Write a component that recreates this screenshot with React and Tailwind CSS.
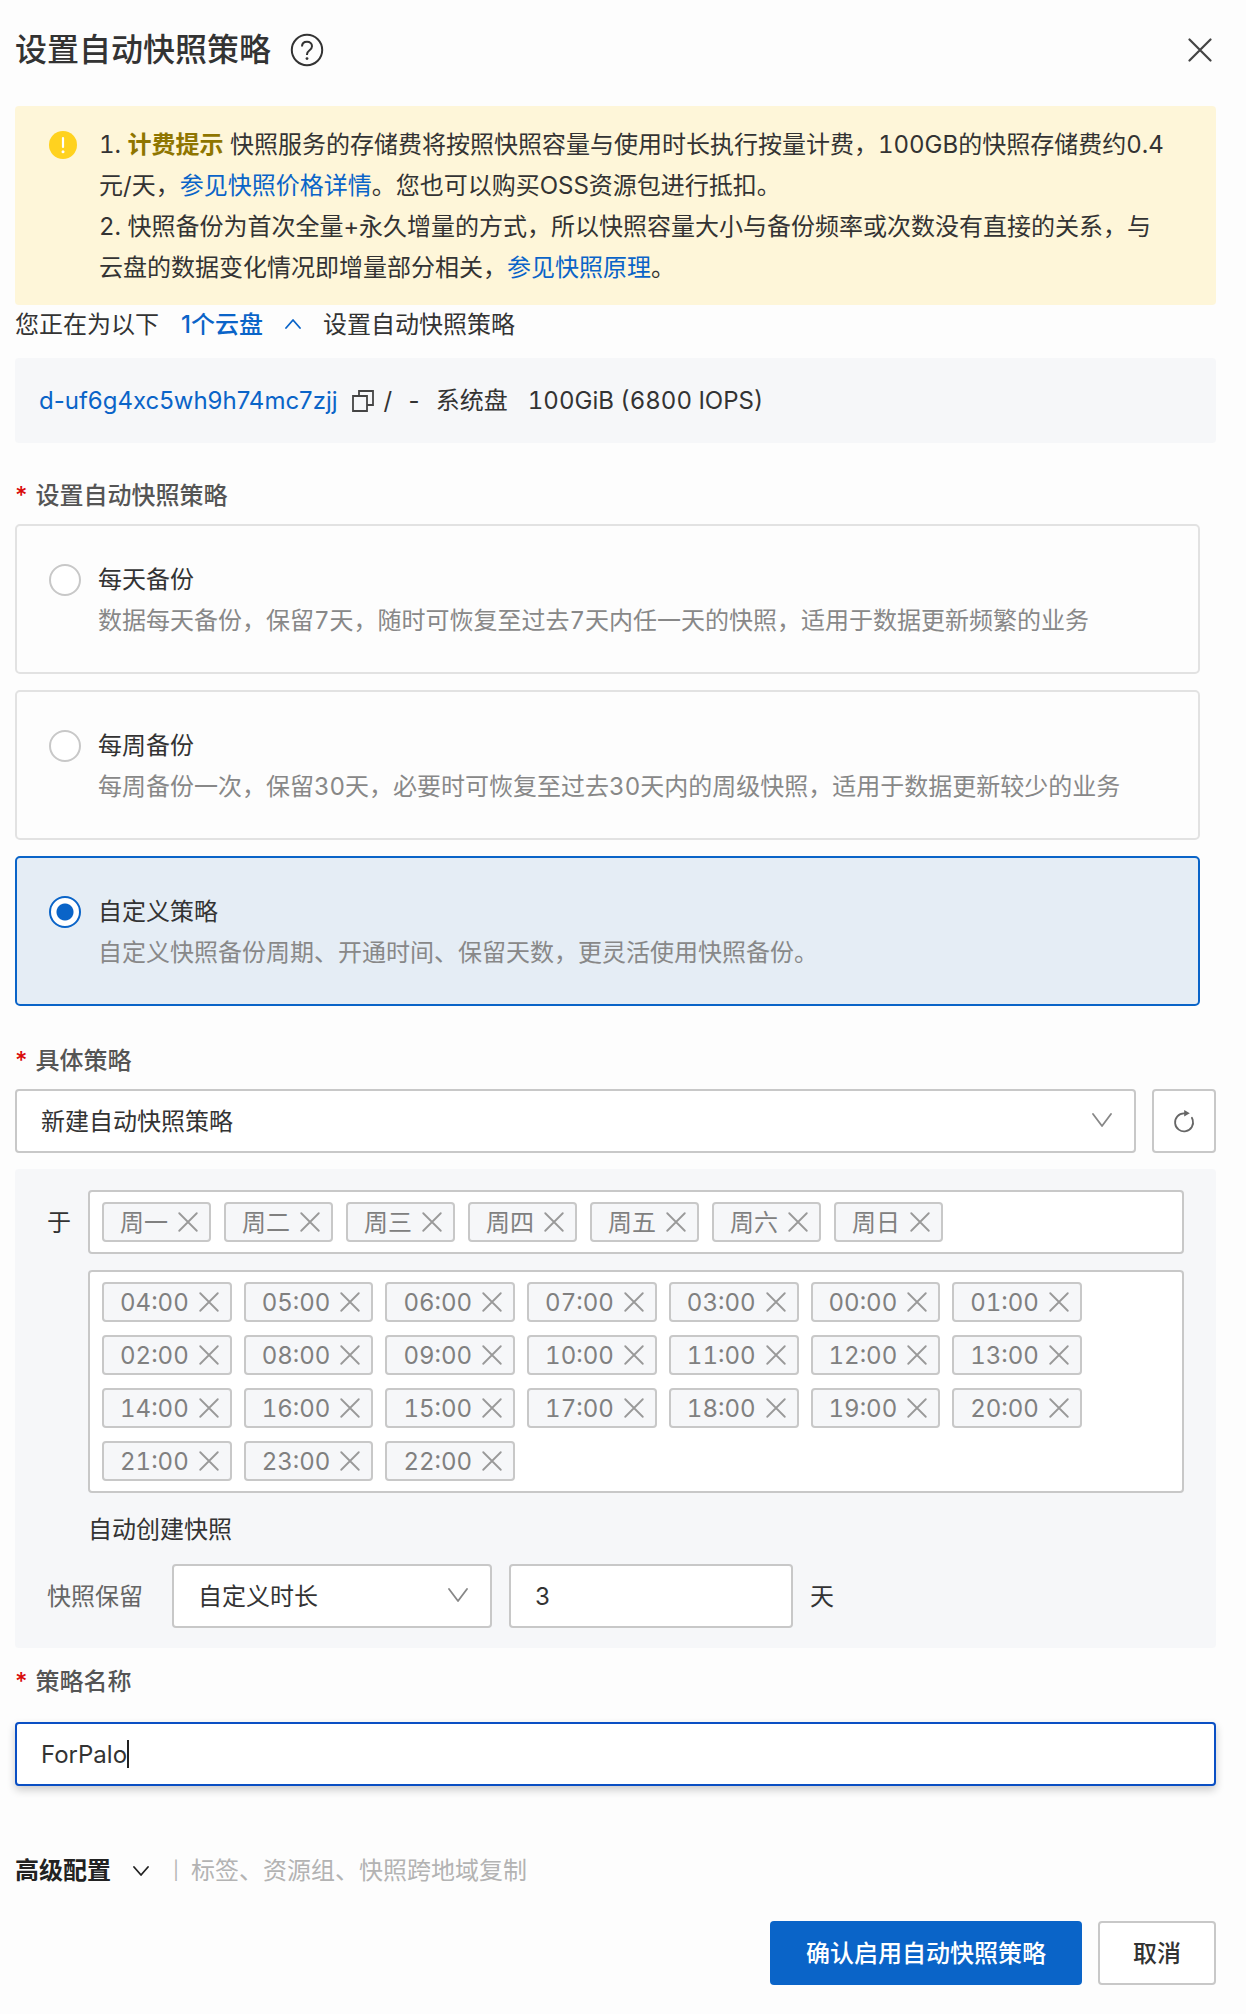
import { useState } from 'react'

const DAYS = ['周一', '周二', '周三', '周四', '周五', '周六', '周日']

const HOURS = [
  '04:00', '05:00', '06:00', '07:00', '03:00', '00:00', '01:00',
  '02:00', '08:00', '09:00', '10:00', '11:00', '12:00', '13:00',
  '14:00', '16:00', '15:00', '17:00', '18:00', '19:00', '20:00',
  '21:00', '23:00', '22:00',
]

const PLANS = [
  {
    id: 'daily',
    title: '每天备份',
    desc: '数据每天备份，保留7天，随时可恢复至过去7天内任一天的快照，适用于数据更新频繁的业务',
  },
  {
    id: 'weekly',
    title: '每周备份',
    desc: '每周备份一次，保留30天，必要时可恢复至过去30天内的周级快照，适用于数据更新较少的业务',
  },
  {
    id: 'custom',
    title: '自定义策略',
    desc: '自定义快照备份周期、开通时间、保留天数，更灵活使用快照备份。',
  },
]

function CrossIcon({ className }) {
  return (
    <svg viewBox="0 0 24 24" className={className} fill="none" stroke="currentColor" strokeWidth="2.2" strokeLinecap="round" aria-hidden="true">
      <path d="M1.5 1.5l21 21M22.5 1.5l-21 21" />
    </svg>
  )
}

function HelpIcon() {
  return (
    <svg viewBox="0 0 34 34" className="size-[34px]" fill="none" stroke="currentColor" strokeWidth="2" aria-hidden="true">
      <circle cx="17" cy="17" r="15.2" />
      <path d="M12 13.6c0-3 2.1-4.8 5-4.8s5 1.8 5 4.5c0 2.2-1.3 3.2-2.7 4.2-1.5 1.1-2.3 1.9-2.3 3.9v.6" />
      <circle cx="17" cy="25.6" r="1.4" fill="currentColor" stroke="none" />
    </svg>
  )
}

function NoticeIcon() {
  return (
    <svg viewBox="0 0 28 28" className="size-7 shrink-0" aria-hidden="true">
      <circle cx="14" cy="14" r="14" fill="#ffd21f" />
      <path d="M14 7v9" stroke="#fff" strokeWidth="2.2" strokeLinecap="round" />
      <circle cx="14" cy="20.8" r="1.5" fill="#fff" />
    </svg>
  )
}

function CopyIcon() {
  return (
    <svg viewBox="0 0 22 22" className="size-[22px]" fill="none" stroke="currentColor" strokeWidth="1.8" aria-hidden="true">
      <path d="M1 6h14v15H1z" />
      <path d="M7 6V1h14v14h-6" />
    </svg>
  )
}

function RefreshIcon() {
  return (
    <svg viewBox="0 0 22 24" className="h-6 w-[22px]" fill="none" stroke="currentColor" strokeWidth="1.8" aria-hidden="true">
      <path d="M12 4.4H11a9 9 0 1 0 8.7 6.4l-.8-2" strokeLinecap="round" />
      <path d="M11.2 1l5.6 3.2-5.6 3.2z" fill="currentColor" stroke="none" />
    </svg>
  )
}

function ChevronIcon({ className, points = '1,1 10,13 19,1', box = '0 0 20 14' }) {
  return (
    <svg viewBox={box} className={className} fill="none" stroke="currentColor" strokeWidth="1.8" strokeLinecap="round" strokeLinejoin="round" aria-hidden="true">
      <polyline points={points} />
    </svg>
  )
}

function FieldLabel({ as: Tag = 'label', children, ...rest }) {
  return (
    <Tag className="flex items-center gap-2 font-medium text-[#555] proportional-nums" {...rest}>
      <span className="text-[#d90b0b]">*</span>
      <span>{children}</span>
    </Tag>
  )
}

function SelectBox({ id, options, className }) {
  return (
    <div className={`relative ${className}`}>
      <select
        id={id}
        className="h-16 w-full appearance-none rounded-[4px] border-2 border-[#c8c8c8] bg-white pr-14 pl-6 text-[#333] outline-none"
      >
        {options.map(item => (
          <option key={item}>{item}</option>
        ))}
      </select>
      <ChevronIcon className="pointer-events-none absolute top-6 right-6 h-[14px] w-5 text-[#888]" />
    </div>
  )
}

function TagBox({ items, onRemove, label, gap }) {
  return (
    <ul aria-label={label} className={`flex min-h-16 flex-wrap gap-y-[13px] rounded-[4px] border-2 border-[#c8c8c8] bg-white px-3 py-[10px] ${gap}`}>
      {items.map(item => (
        <li key={item} className="flex h-10 items-center gap-[10px] rounded-[4px] border-2 border-[#c8c8c8] bg-[#f6f7f9] pr-[11px] pl-4 text-[#808080]">
          {item}
          <button type="button" aria-label={`移除 ${item}`} onClick={() => onRemove(item)} className="text-[#999]">
            <CrossIcon className="size-5" />
          </button>
        </li>
      ))}
    </ul>
  )
}

function App() {
  const [plan, setPlan] = useState('custom')
  const [days, setDays] = useState(DAYS)
  const [hours, setHours] = useState(HOURS)
  const [keepDays, setKeepDays] = useState('3')
  const [name, setName] = useState('ForPalo')

  return (
    <div className="min-h-screen bg-[#fdfdfd] font-['Inter','Noto_Sans_CJK_SC',sans-serif] text-2xl leading-[41px] text-[#333] tabular-nums">
      <div className="pt-[29px] pr-[30px] pb-7 pl-[15px]">
        <header className="flex items-center justify-between">
          <h1 className="flex items-center gap-[19px] text-[32px] font-medium text-[#333]">
            设置自动快照策略
            <button type="button" aria-label="帮助"><HelpIcon /></button>
          </h1>
          <button type="button" aria-label="关闭" className="mr-1 text-[#444]">
            <CrossIcon className="size-6" />
          </button>
        </header>

        <section className="mt-9 flex gap-[22px] rounded-[4px] bg-[#fef6d9] pt-[18px] pr-9 pb-[17px] pl-[34px]">
          <div className="flex h-[41px] items-center"><NoticeIcon /></div>
          <div className="pr-2">
            <p>
              1. <strong className="font-bold text-[#8f7500]">计费提示</strong> 快照服务的存储费将按照快照容量与使用时长执行按量计费，100GB的快照存储费约0.4元/天，
              <a href="#price" className="text-[#0a64c8]">参见快照价格详情</a>。您也可以购买OSS资源包进行抵扣。
            </p>
            <p>
              2. 快照备份为首次全量+永久增量的方式，所以快照容量大小与备份频率或次数没有直接的关系，与云盘的数据变化情况即增量部分相关，
              <a href="#principle" className="text-[#0a64c8]">参见快照原理</a>。
            </p>
          </div>
        </section>

        <div className="flex h-[38px] items-center">
          <span>您正在为以下</span>
          <button type="button" className="mx-[22px] flex items-center gap-[22px] font-medium text-[#0a64c8] proportional-nums">
            1个云盘
            <ChevronIcon className="h-[10px] w-4" box="0 0 16 10" points="1,9 8,1 15,9" />
          </button>
          <span>设置自动快照策略</span>
        </div>

        <div className="mt-[15px] flex items-center rounded-[4px] bg-[#f6f7f9] px-6 py-[22px]">
          <a href="#disk" className="text-[#0a64c8] proportional-nums">d-uf6g4xc5wh9h74mc7zjj</a>
          <button type="button" aria-label="复制" className="mr-[10px] ml-[14px] text-[#444]"><CopyIcon /></button>
          <span>/</span>
          <span className="mx-[14px]">-</span>
          <span>系统盘</span>
          <span className="ml-5">100GiB (6800 IOPS)</span>
        </div>

        <div className="mt-8">
          <FieldLabel as="div" id="plan-label">设置自动快照策略</FieldLabel>
          <div role="radiogroup" aria-labelledby="plan-label" className="mt-2 mr-4 flex flex-col gap-4">
            {PLANS.map(item => (
              <label
                key={item.id}
                className={
                  plan === item.id
                    ? 'flex gap-[17px] rounded-[5px] border-2 border-[#0a64c8] bg-[#e5edf5] px-8 pt-[33px] pb-[31px]'
                    : 'flex gap-[17px] rounded-[5px] border-2 border-[#e2e2e2] px-8 pt-[33px] pb-[31px]'
                }
              >
                <span className="flex h-[41px] items-center">
                  <input
                    type="radio"
                    name="plan"
                    value={item.id}
                    checked={plan === item.id}
                    onChange={() => setPlan(item.id)}
                    className="size-8 appearance-none rounded-full border-2 border-[#c8c8c8] bg-white checked:border-[#0a64c8] checked:bg-[radial-gradient(circle,#0a64c8_8px,#fff_9px)]"
                  />
                </span>
                <span>
                  <span className="block">{item.title}</span>
                  <span className="block text-[#888]">{item.desc}</span>
                </span>
              </label>
            ))}
          </div>
        </div>

        <div className="mt-[34px]">
          <FieldLabel htmlFor="policy">具体策略</FieldLabel>
          <div className="mt-2 flex gap-4">
            <SelectBox id="policy" options={['新建自动快照策略']} className="flex-1" />
            <button type="button" aria-label="刷新" className="flex size-16 items-center justify-center rounded-[4px] border-2 border-[#c8c8c8] bg-white text-[#666]">
              <RefreshIcon />
            </button>
          </div>
        </div>

        <section className="mt-4 rounded-[4px] bg-[#f6f7f9] px-8 pt-[21px] pb-5">
          <div className="flex gap-[17px]">
            <span className="flex h-16 items-center">于</span>
            <div className="flex flex-1 flex-col gap-4">
              <TagBox label="重复日期" gap="gap-x-[13px]" items={days} onRemove={item => setDays(days.filter(day => day !== item))} />
              <TagBox label="创建时间" gap="gap-x-3" items={hours} onRemove={item => setHours(hours.filter(hour => hour !== item))} />
              <span>自动创建快照</span>
            </div>
          </div>
          <div className="mt-[14px] flex items-center">
            <label htmlFor="keep-type" className="text-[#666]">快照保留</label>
            <SelectBox id="keep-type" options={['自定义时长']} className="ml-[29px] w-80" />
            <input
              type="text"
              aria-label="保留天数"
              value={keepDays}
              onChange={event => setKeepDays(event.target.value)}
              className="mx-[17px] h-16 w-[284px] rounded-[4px] border-2 border-[#c8c8c8] bg-white px-6 text-[#333] outline-none"
            />
            <span>天</span>
          </div>
        </section>

        <div className="mt-[13px]">
          <FieldLabel htmlFor="policy-name">策略名称</FieldLabel>
          <div className="relative mt-5">
            <input
              id="policy-name"
              type="text"
              value={name}
              onChange={event => setName(event.target.value)}
              className="block h-16 w-full rounded-[4px] border-2 border-[#0a4fc4] bg-white px-6 text-[#333] shadow-[0_4px_8px_rgba(0,0,0,0.2)] outline-none"
            />
            {/* text cursor */}
            <span className="pointer-events-none absolute top-[18px] left-28 h-7 w-[2px] bg-[#222]" />
          </div>
        </div>

        <div className="mt-16 flex items-center text-[#b3b3b3]">
          <button type="button" className="flex items-center gap-[22px] font-bold text-[#222]">
            高级配置
            <ChevronIcon className="h-[10px] w-4" box="0 0 16 10" points="1,1 8,9 15,1" />
          </button>
          <span className="mr-3 ml-6 text-lg">|</span>
          <span>标签、资源组、快照跨地域复制</span>
        </div>

        <footer className="mt-[30px] flex justify-end gap-4">
          <button type="button" className="h-16 rounded-[4px] bg-[#0a64c8] px-9 font-medium text-white">
            确认启用自动快照策略
          </button>
          <button type="button" className="h-16 rounded-[4px] border-2 border-[#c8c8c8] bg-white px-[33px] font-medium text-[#333]">
            取消
          </button>
        </footer>
      </div>
    </div>
  )
}

export default App
